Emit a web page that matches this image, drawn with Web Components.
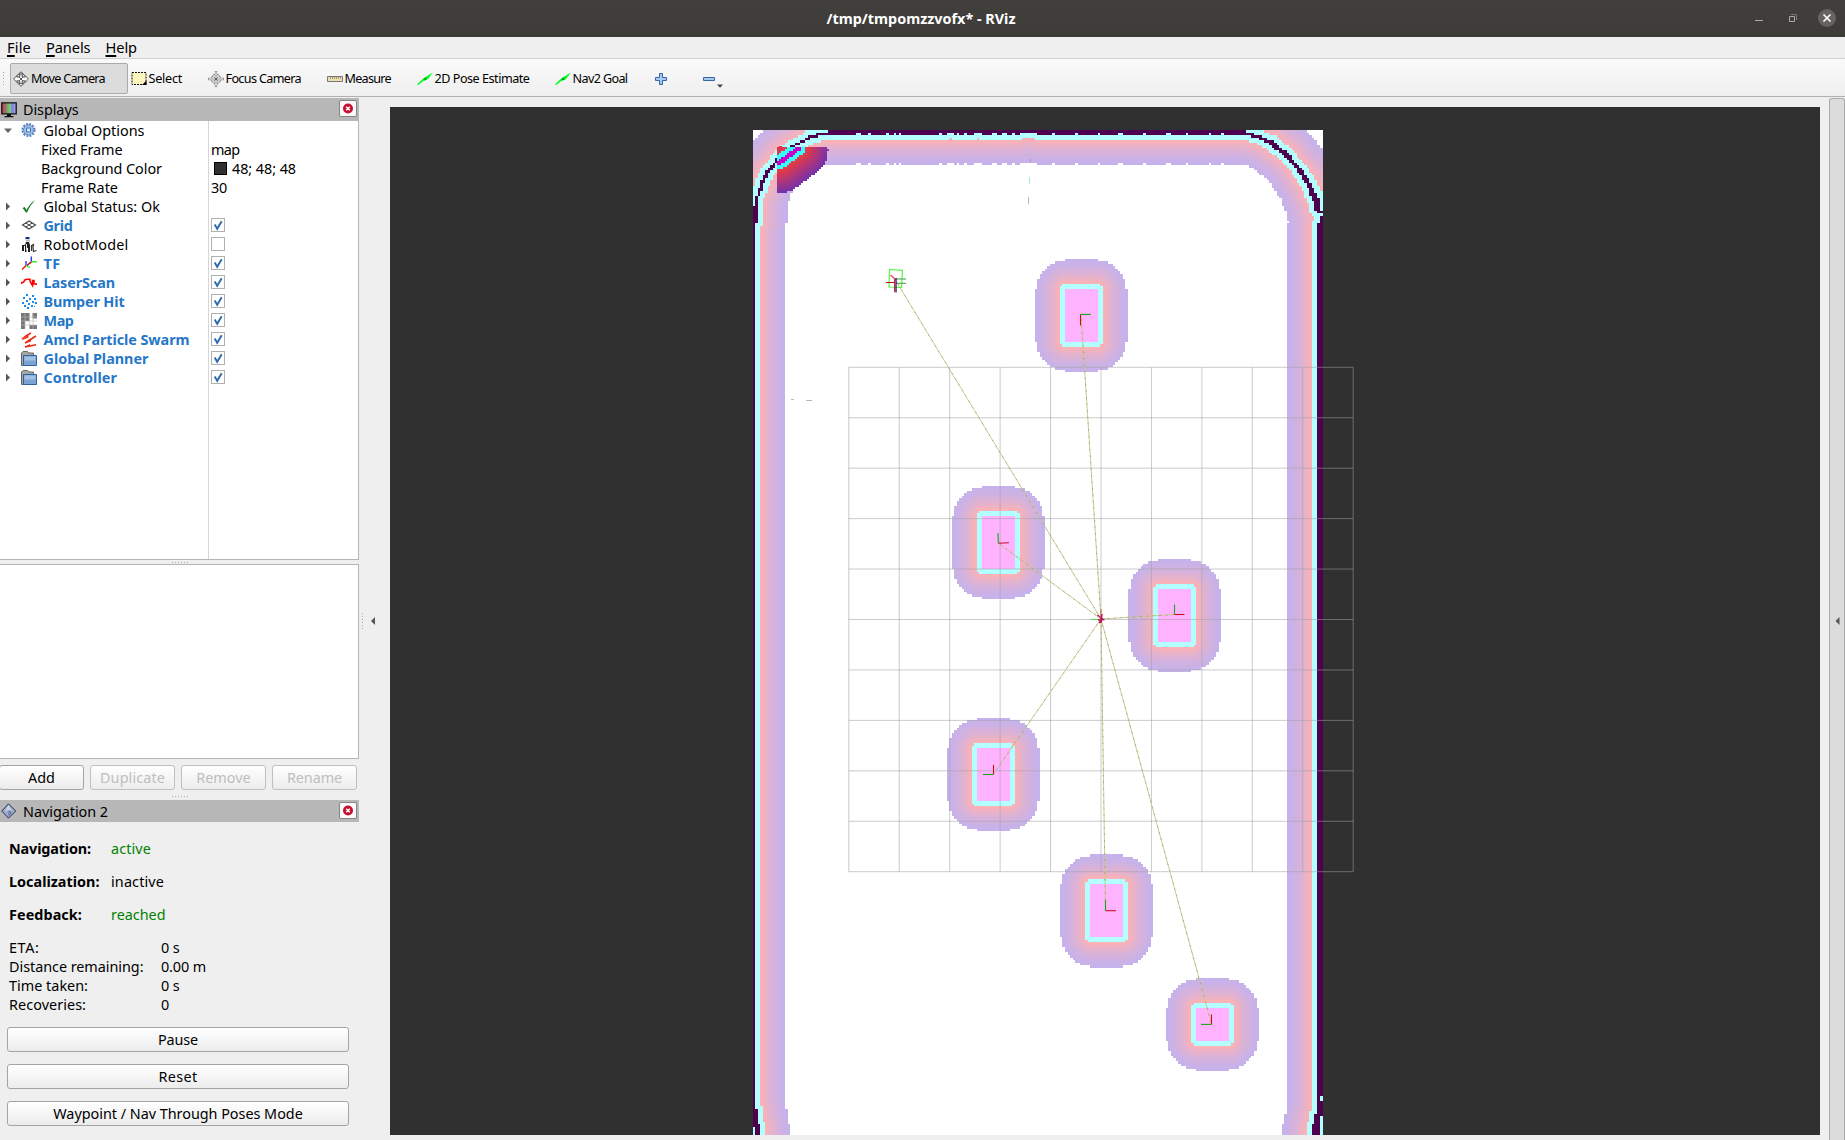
<!DOCTYPE html>
<html lang="en">
<head>
<meta charset="utf-8">
<title>RViz</title>
<style>
html,body{margin:0;height:100%;overflow:hidden;background:#efefef}
body{font:14.4px/19px "Noto Sans","Open Sans",sans-serif;color:#000}
</style>
</head>
<body>
<rviz-window></rviz-window>
<script>
const define=(name,html,after)=>customElements.define(name,class extends HTMLElement{
  connectedCallback(){
    if(this.shadowRoot)return;
    const root=this.attachShadow({mode:'open'});
    root.innerHTML=typeof html==='function'?html(this):html;
    if(after)after(this,root);
  }
});

/* A label whose tracking is adjusted to span an exact width. */
define('fit-text','<style>:host{display:inline-block;white-space:pre;flex:none;justify-self:start}</style><slot></slot>',el=>{
  const w=+el.getAttribute('w'),n=el.textContent.length;
  const natural=el.getBoundingClientRect().width;
  el.style.letterSpacing=((w-natural)/n)+'px';
});

const svg=(inner,w=16,h=16)=>`<svg width="${w}" height="${h}" viewBox="0 0 ${w} ${h}">${inner}</svg>`;
const arrow=svg('<path d="M.2 13.300 6.500 7.200 9 5.800 15.800 1.500 11.500 7.500 9.500 9 7 9.600 1 14.300Z" fill="#0f2"/><path d="M6.500 8.500 8.500 6l1 2.500-2 1Z" fill="#079e16"/>');
const ICONS={
move:svg('<g fill="none" stroke="#555" stroke-width="1"><path d="M8 .8 10.4 3H9.2v3h3V4.700L15.400 8l-3.200 3.200V9.800h-3v3h1.300L8 15.300 5.500 12.800h1.300v-3h-3v1.400L.6 8l3.200-3.300V6h3V3H5.600Z" fill="#fff"/><path d="M3.500 5Q8 .5 12.500 5M4 11.500Q8 14 12 11.500M6 6l4 4M10 6l-4 4"/></g>'),
select:svg('<path d="M1 1.5h14v12H1Z" fill="#fdf6bf" stroke="#111" stroke-dasharray="2 1"/><path d="M15.5 9.5V14H11Z" fill="#000"/>'),
focus:svg('<g fill="none" stroke="#777"><circle cx="8" cy="8" r="4.700"/><circle cx="8" cy="8" r="2.400"/><path d="M8 0v16M0 8h16" stroke="#999" stroke-width="2.600"/><path d="M8 1v14M1 8h14" stroke="#eee" stroke-width="1"/></g><circle cx="8" cy="8" r="1" fill="#333"/>'),
measure:svg('<path d="M.5 5.500h15v5H.5Z" fill="#ece0b3" stroke="#777"/><path d="M3.500 6v2M5.500 6v2M7.500 6v2M9.500 6v2M11.500 6v2M13.500 6v2" stroke="#a5966b"/>'),
arrow,
plus:svg('<path d="M6.500 2.500h3v4h4v3h-4v4h-3v-4h-4v-3h4Z" fill="#a8c9ed" stroke="#3465a4"/>'),
minus:svg('<path d="M2.500 6.500h11v3h-11Z" fill="#a8c9ed" stroke="#3465a4"/>'),
gear:svg('<circle cx="7.500" cy="7" r="6" fill="none" stroke="#4a7fc0" stroke-width="2" stroke-dasharray="1.900 1.240"/><circle cx="7.500" cy="7" r="4.900" fill="#a6c4ea" stroke="#5b8bc8"/><path d="M5.500 5h4v4h-4Z" fill="#d9e7f7" stroke="#3f74b6"/>'),
check:svg('<path d="M1.500 9 3.800 8 5.500 11Q8.800 4.500 14 1.200 8.700 6.500 6 13.500H4.800Q3.500 11 1.500 9Z" fill="#1e7a26"/>'),
grid:svg('<path d="M1.500 7 8 3 14.500 7 8 11Z" fill="none" stroke="#444" stroke-width="1.100"/><path d="M4.800 5 11.200 9M11.200 5 4.800 9" fill="none" stroke="#444" stroke-width="1"/>'),
robot:svg('<path d="M4.500 0h4v2h-4Z" fill="#123488"/><path d="M4 2.500h5v2H5Z" fill="#bbb"/><path d="M5 5h3l1 3v7H7v-4H5.500v4H4V9H3v5H1V8h3Z" fill="#222"/><path d="M10.500 14V8.500l2-1-.5 3 .5 4 3-1" fill="none" stroke="#333" stroke-width="1.200"/><path d="M5.500 7v6" stroke="#ddd"/>'),
tf:svg('<g fill="none" stroke-width="1.300"><path d="M5 9V5" stroke="#22f"/><path d="M5 9.500 1 13.500" stroke="red"/><path d="M5 9.500l4 2" stroke="#0f0"/><path d="M6 9.500 10 6" stroke="#a00"/><path d="M10.300 5.500V.5" stroke="#22f"/><path d="M10.300 5.800h5.500" stroke="#0e0"/><path d="M10.300 5.800 9 7" stroke="red"/></g>'),
laser:svg('<path d="M.5 9V7.500H2L3.500 6V5L6 4.200H9V6l1.500 3 1 1.500V5.500H13V9h2.500v1" fill="none" stroke="red" stroke-width="1.500"/>'),
bumper:svg('<path d="M5 0h2v2H5zM11 1h2v2h-2zM2 3h2v2H2zM8 4h2v2H8zM13 4h2v2h-2zM5 6h2v2H5zM11 7h2v2h-2zM1 8h2v2H1zM14 8h2v2h-2zM7 9h2v2H7zM3 11h2v2H3zM10 11h2v2h-2zM13 12h1v1h-1zM6 13h2v2H6z" fill="#148bf0"/>'),
map:svg('<path d="M0 0h8.500v8H4v8H0ZM11.500 0H16v5.500h-4.500ZM8.500 12H16v4H8.500Z" fill="#777"/><path d="M0 4h16M0 8h16M0 12h16M4 0v16M8.500 0v16M12 0v16" stroke="#bbb" stroke-width=".6"/>'),
amcl:svg('<path d="M1 7Q6 3 10 1M4 11 15 4M4 15 15 12.700" stroke="#ee2a12" stroke-width="1.500"/><path d="M.5 8.500 7.500 3v2.500ZM4 11.500 10 6.500v3ZM3 15 9 12v3Z" fill="#ee2a12"/>'),
folder:svg('<path d="M.5 2 2 .5h4.500L8 2h4.500v12.500H.5Z" fill="#a5a7a4" stroke="#666"/><path d="M2.500 4.500h13v10h-13Z" fill="#7ba4d4" stroke="#31639c"/><path d="M3.500 5.500h11v4h-11Z" fill="#a3c1e3"/>'),
display:svg('<defs><linearGradient id="s"><stop offset="0" stop-color="#b34a50"/><stop offset=".28" stop-color="#b5656b"/><stop offset=".38" stop-color="#63b35f"/><stop offset=".6" stop-color="#82c983"/><stop offset=".7" stop-color="#7b7bd8"/><stop offset="1" stop-color="#aaaaf0"/></linearGradient></defs><path d="M.8.800h14.400v11H.8Z" fill="url(#s)" stroke="#111" stroke-width="1.300"/><path d="M6 12h4v2h2.500v1.200h-9V14H6Z" fill="#111"/>'),
diamond:svg('<path d="M7.500.800 14.700 8 7.500 15.200.8 8Z" fill="#9fadca" stroke="#26324c"/><path d="M7.500 2 4 8l3.500-1 3.500 1Z" fill="#cdd4e3"/><path d="M7.500 7 11 9 7.500 14.500Z" fill="#6d80ac"/>')
};
define('rviz-icon',el=>`<style>:host{display:block;width:16px;height:16px;flex:none}svg{display:block}</style>${ICONS[el.getAttribute('name')]}`);

define('title-bar',`<style>
:host{display:grid;grid-template-columns:1fr auto 1fr;align-items:center;height:37px;background:linear-gradient(#42403d,#3c3b37);color:#fff;font-weight:700;font-size:14.4px}
.c{display:flex;justify-content:flex-end;align-items:center;padding-right:8px}
fit-text{margin-right:3px}
svg{display:block}
</style><span></span><fit-text w="189">/tmp/tmpomzzvofx* - RViz</fit-text>
<div class="c"><svg width="90" height="37"><g fill="none"><path d="M8 20.500h8" stroke="#aaa"/><path d="M42.500 16.500h5v5h-5Z" stroke="#aaa"/><path d="M44 14.500h5.500V20" stroke="#77756f"/><circle cx="80" cy="18" r="9" fill="#646361"/><path d="m76.500 14.500 7 7m0-7-7 7" stroke="#fff" stroke-width="1.700"/></g></svg></div>`);

define('menu-bar',`<style>:host{display:flex;height:21px;padding-left:7px;gap:15px;font-size:14.600px;line-height:20px;border-bottom:1px solid #d0d0d0;background:#efefef}u{text-underline-offset:2px;text-decoration-thickness:1.500px}</style>
<fit-text w="24"><u>F</u>ile</fit-text><fit-text w="44.500"><u>P</u>anels</fit-text><fit-text w="31.500"><u>H</u>elp</fit-text>`);

define('tool-button',el=>`<style>
:host{display:flex;align-items:center;gap:2px;box-sizing:border-box;height:31px;width:${el.getAttribute('width')}px;padding-left:2px;border:1px solid transparent;border-radius:2px;font-size:12.600px;flex:none}
:host([active]){background:#dcdcdc;border-color:#ababab}
</style><rviz-icon name="${el.getAttribute('icon')}"></rviz-icon>${el.hasAttribute('w')?`<fit-text w="${el.getAttribute('w')}">${el.getAttribute('label')}</fit-text>`:''}`);

define('tool-bar',`<style>
:host{display:flex;align-items:center;height:38px;box-sizing:border-box;background:linear-gradient(#fafafa,#efefef);border-bottom:1px solid #b1b1b1;padding:2px 0 0 2px}
.g{width:4px;height:16px;margin-right:4px;background:radial-gradient(circle,#aaa .7px,transparent .9px) 0 0/3px 3px}
.d{align-self:flex-end;margin:0 0 3px -3px}
</style><span class="g"></span>
<tool-button active icon="move" label="Move Camera" width="117.500" w="74"></tool-button>
<tool-button icon="select" label="Select" width="77" w="33.500"></tool-button>
<tool-button icon="focus" label="Focus Camera" width="119" w="75.500"></tool-button>
<tool-button icon="measure" label="Measure" width="90" w="46.500"></tool-button>
<tool-button icon="arrow" label="2D Pose Estimate" width="138" w="95"></tool-button>
<tool-button icon="arrow" label="Nav2 Goal" width="98" w="55"></tool-button>
<tool-button icon="plus" width="48"></tool-button>
<tool-button icon="minus" width="22"></tool-button><svg class="d" width="8" height="10"><path d="M0 1.500h6L3 4.800Z" fill="#444"/></svg>`);

define('panel-title',el=>`<style>
:host{display:flex;align-items:center;height:${el.getAttribute('height')}px;background:#b7b7b7;padding:0 2px 0 1px;font-size:14.400px}
rviz-icon{margin-right:6px}
.x{margin-left:auto;width:16px;height:15px;border:1px solid #858585;border-radius:2px;background:#fafafa;margin-top:-2px}
.x svg{display:block}
</style><rviz-icon name="${el.getAttribute('icon')}"></rviz-icon><fit-text w="${el.getAttribute('w')}">${el.getAttribute('label')}</fit-text>
<span class="x"><svg width="16" height="15"><circle cx="8" cy="7.500" r="5" fill="#c8102e"/><path d="m6.200 5.700 3.600 3.600m0-3.600-3.600 3.600" stroke="#fff" stroke-width="1.500"/></svg></span>`);

define('tree-row',el=>{
  const g=n=>el.getAttribute(n),v=g('value');
  return `<style>
:host{display:grid;grid-template-columns:209px 1fr;height:19px}
.n{display:flex;align-items:center;border-right:1px solid #d6d6d6}
.a{width:20px;height:19px;flex:none}
rviz-icon{margin-right:6.500px}
.v{display:flex;align-items:center;padding-left:2px}
.k{box-sizing:border-box;width:14px;height:14px;border:1px solid #b0b0b0;background:#fff;margin:-1px 0 0 0}
.k svg{display:block}
.s{width:11px;height:11px;border:1px solid #000;background:#303030;margin:0 5px 0 3px}
.b{font-weight:700;color:#2677c8}
</style><div class="n"><svg class="a">${g('open')!==null?'<path d="M4 7.500h8l-4 4.500Z" fill="#666"/>':g('icon')?'<path d="M6 5.500v8l4-4Z" fill="#555"/>':''}</svg>
${g('icon')?`<span style="width:1px"></span><rviz-icon name="${g('icon')}"></rviz-icon>`:'<span style="width:21px"></span>'}
<fit-text class="${g('bold')!==null?'b':''}" w="${g('w')}">${g('label')}</fit-text></div>
<div class="v">${g('check')!==null?`<span class="k">${g('check')==='1'?'<svg width="12" height="12"><path d="M2.700 5.500 5.200 9.800 9.700 2.300" fill="none" stroke="#2c6aab" stroke-width="1.900"/></svg>':''}</span>`:''}${g('swatch')!==null?'<span class="s"></span>':''}${v?`<fit-text w="${g('vw')}">${v}</fit-text>`:''}</div>`});

define('display-tree',`<style>
:host{display:flex;flex-direction:column;box-sizing:border-box;height:439px;background:#fff;border-right:1px solid #b5b5b5;border-bottom:1px solid #b5b5b5}
.f{flex:1;width:208px;border-right:1px solid #d6d6d6}
</style>
<tree-row open icon="gear" label="Global Options" w="101"></tree-row>
<tree-row label="Fixed Frame" w="81.500" value="map" vw="28.500"></tree-row>
<tree-row label="Background Color" w="121" swatch value="48; 48; 48" vw="64"></tree-row>
<tree-row label="Frame Rate" w="77" value="30" vw="16"></tree-row>
<tree-row icon="check" label="Global Status: Ok" w="116.500"></tree-row>
<tree-row icon="grid" bold label="Grid" w="29" check="1"></tree-row>
<tree-row icon="robot" label="RobotModel" w="85" check="0"></tree-row>
<tree-row icon="tf" bold label="TF" w="17" check="1"></tree-row>
<tree-row icon="laser" bold label="LaserScan" w="71.500" check="1"></tree-row>
<tree-row icon="bumper" bold label="Bumper Hit" w="81" check="1"></tree-row>
<tree-row icon="map" bold label="Map" w="30" check="1"></tree-row>
<tree-row icon="amcl" bold label="Amcl Particle Swarm" w="146" check="1"></tree-row>
<tree-row icon="folder" bold label="Global Planner" w="105" check="1"></tree-row>
<tree-row icon="folder" bold label="Controller" w="73.500" check="1"></tree-row>
<div class="f"></div>`);

define('push-button',el=>`<style>
:host{display:flex;align-items:center;justify-content:center;box-sizing:border-box;height:25px;border:1px solid #a4a4a4;border-radius:3px;background:linear-gradient(#fff,#ececec);font-size:14.400px}
:host([disabled]){color:#bebebe;border-color:#c0c0c0}
</style><fit-text w="${el.getAttribute('w')}">${el.getAttribute('label')}</fit-text>`);

const dotsH='<svg width="18" height="3" style="display:block"><path d="M1 1.500h17" stroke="#aaa" stroke-dasharray="1 2"/></svg>';
define('displays-panel',`<style>
:host{display:block}
.h{display:flex;justify-content:center;align-items:center;height:4px}
.d{box-sizing:border-box;height:195px;background:#fff;border:solid #b5b5b5;border-width:1px 1px 1px 0}
.b{display:grid;grid-template-columns:repeat(4,85px);gap:6px;margin:6px 0 4px -1px;height:25px}
</style>
<panel-title icon="display" label="Displays" w="55.500" height="23"></panel-title>
<display-tree></display-tree><div class="h">${dotsH}</div><div class="d"></div>
<div class="b"><push-button label="Add" w="27"></push-button><push-button disabled label="Duplicate" w="65"></push-button><push-button disabled label="Remove" w="54.500"></push-button><push-button disabled label="Rename" w="55"></push-button></div><div class="h">${dotsH}</div>`);

define('nav-panel',`<style>
:host{display:block}
.s{display:grid;grid-template-columns:102px 1fr;grid-auto-rows:33px;align-items:center;padding:10px 0 0 9px}
.s fit-text:nth-child(odd){font-weight:700}
.g{color:#028102}
.m{display:grid;grid-template-columns:152px 1fr;grid-auto-rows:19px;padding:7px 0 0 9px}
.b{display:grid;gap:12px;padding:13px 10px 0 7px}
</style>
<panel-title icon="diamond" label="Navigation 2" w="85" height="22"></panel-title>
<div class="s"><fit-text w="82">Navigation:</fit-text><fit-text class="g" w="40">active</fit-text>
<fit-text w="90.500">Localization:</fit-text><fit-text w="53">inactive</fit-text>
<fit-text w="73">Feedback:</fit-text><fit-text class="g" w="54.500">reached</fit-text></div>
<div class="m"><fit-text w="30.500">ETA:</fit-text><fit-text w="18.500">0 s</fit-text>
<fit-text w="134.500">Distance remaining:</fit-text><fit-text w="45">0.00 m</fit-text>
<fit-text w="79">Time taken:</fit-text><fit-text w="18.500">0 s</fit-text>
<fit-text w="77">Recoveries:</fit-text><fit-text w="8.500">0</fit-text></div>
<div class="b"><push-button label="Pause" w="40"></push-button><push-button label="Reset" w="39"></push-button><push-button label="Waypoint / Nav Through Poses Mode" w="249.500"></push-button></div>`);

/* Costmap: lethal cells inflated by their euclidean distance. */
function costmap(){
  const X0=752.5,Y0=130,SX=2.52,SY=2.523,W=226,H=399,R=12;
  const px=i=>i>=W?1323:Math.round(X0+i*SX),py=j=>Math.min(1135,Math.round(Y0+j*SY));
  const ci=x=>Math.floor((x-X0)/SX+.01),cj=y=>Math.floor((y-Y0)/SY+.01);
  const kind=new Uint8Array(W*H),dist=new Float32Array(W*H).fill(99);
  const put=(i,j,k)=>{if(i>=0&&j>=0&&i<W&&j<H)kind[j*W+i]=k};
  const fill=(x0,y0,x1,y1)=>{for(let j=cj(y0);j<=cj(y1);j++)for(let i=ci(x0);i<=ci(x1);i++)put(i,j,1)};
  const line=pts=>{for(let n=1;n<pts.length;n++){const[a,b]=pts[n-1],[c,d]=pts[n];const L=Math.ceil(Math.hypot(c-a,d-b));
    for(let t=0;t<=L;t++){const x=a+(c-a)*t/L,y=b+(d-b)*t/L;put(ci(x),cj(y),1)}}};
  fill(830,131,1244,131);
  const gaps=[[856,861],[869,871],[886,889],[894,897],[899,902],[939,942],[947,955],[957,960],[965,967],[975,983],[992,998],[1002,1008],[1013,1016],[1020,1038],[1052,1056],[1074,1080],[1098,1101],[1118,1124],[1143,1147],[1165,1171],[1186,1190],[1209,1213],[1221,1226]];
  for(let x=830;x<1244;x+=1)if(!gaps.some(g=>x>=g[0]&&x<g[1]))put(ci(x),1,1);
  line([[830,132],[820,134],[811,137],[803,141],[796,145],[788,150],[780,157],[774,164],[768,172],[763,181],[760,189],[757,197],[756,208]]);
  fill(754,208,757,221);
  const arcR=[[1246,134],[1256,136],[1264,140],[1271,143],[1278,149],[1285,155],[1291,162],[1298,169],[1304,178],[1309,187],[1313,196],[1316,205],[1317,211]];
  line(arcR);line(arcR.map(([x,y])=>[x+2.500,y]));
  fill(754,222,754,1110);fill(754,1110,757,1126);fill(756.500,1126,758,1135);
  fill(1320.500,216,1322,222);fill(1319,224,1322,1095);fill(1319,1095,1319,1102);fill(1319,1102,1322,1115);fill(1316,1115,1318,1126);fill(1314,1126,1317,1135);
  for(const[x,y,h]of[[1065,289,21],[981.700,516,21],[1158,589,21],[977,748,21],[1090,884.400,21],[1195.700,1008,13]]){
    const i0=Math.round((x-X0)/SX),j0=Math.round((y-Y0)/SY);
    for(let j=0;j<h;j++)for(let i=0;i<13;i++)put(i0+i,j0+j,2);
  }
  for(let j=0;j<H;j++)for(let i=0;i<W;i++)if(kind[j*W+i])
    for(let b=-R;b<=R;b++)for(let a=-R;a<=R;a++){
      const x=i+a,y=j+b;if(x<0||y<0||x>=W||y>=H)continue;
      const d=Math.hypot(a,b);if(d<=R&&d<dist[y*W+x])dist[y*W+x]=d;
    }
  const paths={};
  for(let j=0;j<H;j++){let run=null,s=0;
    for(let i=0;i<=W;i++){let c=null;
      if(i<W){const k=kind[j*W+i],d=dist[j*W+i];
        if(k===1)c='#4d004d';else if(k===2)c='#ffb3ff';else if(d<=2.300)c='#b3ffff';
        else if(d<=R){const t=.94*Math.exp(-(d-3)*.15);c=`rgb(${Math.round(178+77*t)},178,${Math.round(255-77*t)})`}}
      if(c!==run){if(run)(paths[run]??=[]).push(`M${px(s)} ${py(j)}H${px(i)}V${py(j+1)}H${px(s)}Z`);run=c;s=i}
    }}
  let out='<rect x="753" y="130" width="570" height="1005" fill="#fff"/>';
  for(const c in paths)out+=`<path fill="${c}" d="${paths[c].join('')}"/>`;
  /* Rolling local window near the top left corner. */
  const A=[778,162],B=[798,147],vx=B[0]-A[0],vy=B[1]-A[1];
  for(let y=147;y<193;y+=2)for(let x=777;x<827;x+=2){
    const t=Math.max(0,Math.min(1,((x-A[0])*vx+(y-A[1])*vy)/(vx*vx+vy*vy)));
    const d=Math.hypot(x-A[0]-t*vx,y-A[1]-t*vy);
    if(d>30)continue;
    const q=Math.max(0,1-Math.max(0,d-6)/26);
    const c=d<2.300?'#c800cc':d<7?'#33ffff':`rgb(${Math.round(105+135*q)},${Math.round(48+10*q)},${Math.round(182-122*q)})`;
    out+=`<rect x="${x}" y="${y}" width="2" height="2" fill="${c}"/>`;
  }
  return `<g shape-rendering="crispEdges">${out}<path d="M779 146h3v3h-3Z" fill="#f03040"/><path d="M822 149h7v2h-7Z" fill="#8a35ab"/></g>`;
}
function scene(){
  let g='';
  for(let n=0;n<=10;n++){const x=848.800+n*50.440,y=367.300+n*50.440;
    g+=`M${x} 367.300V871.700M848.800 ${y}H1353.200`}
  const c=[1101,619],ends=[[896,281],[1081,315],[998.400,543.300],[1174.500,614.500],[993.500,774],[1105.500,910.500],[1211.500,1024]];
  const tf=ends.map(e=>`M${c}L${e}`).join('');
  const axes=[[1080.500,314.400,0,11,10.500,0],[998.400,543.300,10.500,-.5,-.5,-10],[1174.500,614.500,10,0,0,-10],[993.500,774.500,0,-9.500,-10.500,0],[1105.500,910.700,10.500,0,0,-10.500],[1211.500,1024.400,0,-10,-10.500,0]];
  return `<path d="${g}" stroke="#a0a0a4" stroke-opacity=".55" fill="none"/>
<g fill="none"><path d="${tf}" stroke="#c6c68a" stroke-width=".9"/><path d="${tf}" stroke="#77773c" stroke-width=".7" stroke-dasharray="1.500 5" opacity=".7"/>
${axes.map(([x,y,a,b,p,q])=>`<path d="M${x} ${y}l${a} ${b}" stroke="#cc0c22" stroke-width="1.100"/><path d="M${x} ${y}l${p} ${q}" stroke="#15a815" stroke-width="1.100"/>`).join('')}
<path d="M1091 619.500h8" stroke="#4ad84a"/><path d="M1101 609v7" stroke="#c36a35"/><path d="m1097.500 615 5 4-3.500 4m3-9-1 9m-3-3 6.500-.5" stroke="#b80f55" stroke-width="1.400"/>
<path d="m889.500 269.500 13 .8-1 17-12.500-.3Z" stroke="#55f545" stroke-width="1.200"/>
<path d="M896 279h10M896 283.300h10" stroke="#3a9a45"/><path d="M886 282.500h9" stroke="#c00"/><path d="m890.500 275 5 4.500" stroke="#ef4560" stroke-width="1.300"/><path d="M894.500 279v13" stroke="#d22040"/><path d="M896 278v14.500" stroke="#22125e" stroke-width="1.300"/></g>
<g shape-rendering="crispEdges"><path d="M1030 159h1v4h-1Z" fill="#d88ba5"/><path d="M1029 177h1v7h-1Z" fill="#a6eaea"/><path d="M1028 197h1v7h-1Z" fill="#caa3cf"/><path d="M791 399h3v1h-3ZM806 400h6v1h-6Z" fill="#b9b0b9"/></g>`;
}
define('scene-view',()=>`<style>:host{display:block;width:1430px;height:1028px;background:#303030;overflow:hidden}svg{display:block}</style>
<svg width="1430" height="1028" viewBox="390 107 1430 1028">${costmap()}${scene()}</svg>`);

define('side-handle',el=>`<style>:host{display:flex;align-items:center;justify-content:center}svg{display:block}</style>
<svg width="16" height="20">${el.hasAttribute('dots')?'<path d="M.5 2v17" stroke="#aaa" stroke-dasharray="1 2"/><path d="M13 6v8L9 10Z" fill="#555"/>':'<path d="M9.500 6v8L5.500 10Z" fill="#555"/>'}</svg>`);

define('rviz-window',`<style>
:host{display:flex;flex-direction:column;width:1845px;height:1140px;background:#efefef;overflow:hidden}
.m{display:grid;grid-template-columns:359px 31px 1430px 9px 16px;height:1042px;margin-top:1px}
.l{display:flex;flex-direction:column}
displays-panel{height:702px}
scene-view{margin-top:9px}
.r{box-sizing:border-box;border:solid #a9a9a9;border-width:1px 1px 0 1px;border-radius:3px 3px 0 0;background:#dcdcdc;display:flex;justify-content:center}
.h{display:flex;align-items:center;padding:4px 0 0 3px;justify-content:flex-start}
.r side-handle{width:14px;padding-top:3px}
</style><title-bar></title-bar><menu-bar></menu-bar><tool-bar></tool-bar>
<div class="m"><div class="l"><displays-panel></displays-panel><nav-panel></nav-panel></div>
<div class="h"><side-handle dots></side-handle></div><scene-view></scene-view><span></span><div class="r"><side-handle></side-handle></div></div>`);
</script>
</body>
</html>
